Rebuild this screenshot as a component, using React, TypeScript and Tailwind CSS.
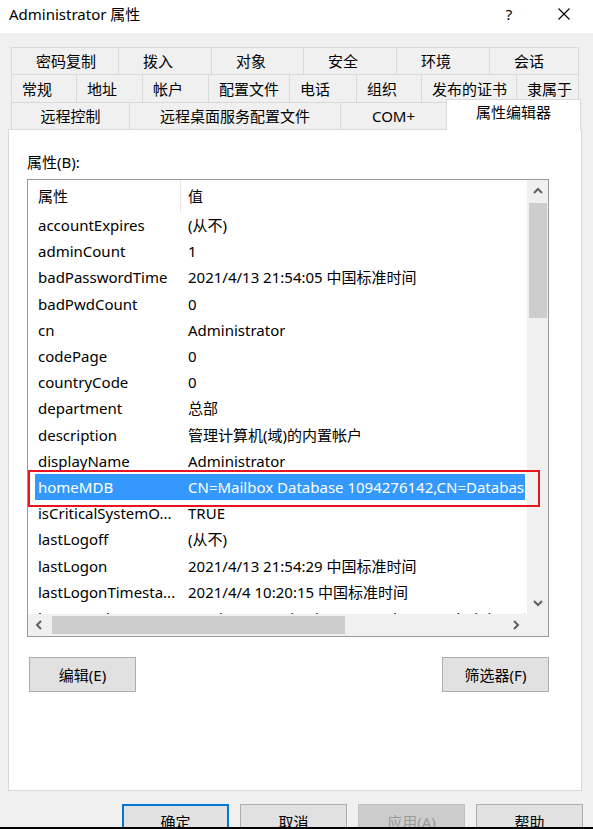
import React from "react";

const rows: [string, string][] = [
  ["accountExpires", "(从不)"],
  ["adminCount", "1"],
  ["badPasswordTime", "2021/4/13 21:54:05 中国标准时间"],
  ["badPwdCount", "0"],
  ["cn", "Administrator"],
  ["codePage", "0"],
  ["countryCode", "0"],
  ["department", "总部"],
  ["description", "管理计算机(域)的内置帐户"],
  ["displayName", "Administrator"],
  ["homeMDB", "CN=Mailbox Database 1094276142,CN=Databases,CN=Exchange Administrative Group"],
  ["isCriticalSystemO...", "TRUE"],
  ["lastLogoff", "(从不)"],
  ["lastLogon", "2021/4/13 21:54:29 中国标准时间"],
  ["lastLogonTimesta...", "2021/4/4 10:20:15 中国标准时间"],
  ["legacyExchangeDN", "/o=First Organization/ou=Exchange Administrative Group (FYDIBOHF23SPDLT)/cn=Recipients"],
];

const row1: [string, number][] = [
  ["密码复制", 107],
  ["拨入", 93],
  ["对象", 92],
  ["安全", 93],
  ["环境", 93],
  ["会话", 90],
];
const row2: [string, number][] = [
  ["常规", 65],
  ["地址", 66],
  ["帐户", 66],
  ["配置文件", 81],
  ["电话", 67],
  ["组织", 65],
  ["发布的证书", 95],
  ["隶属于", 63],
];
const row3: [string, number][] = [
  ["远程控制", 118],
  ["远程桌面服务配置文件", 211],
  ["COM+", 106],
];

function Chevron({ dir }: { dir: "up" | "down" | "left" | "right" }) {
  const pts =
    dir === "up"
      ? "1,6 5,2 9,6"
      : dir === "down"
      ? "1,2 5,6 9,2"
      : dir === "left"
      ? "6,1 2,5 6,9"
      : "2,1 6,5 2,9";
  const w = dir === "up" || dir === "down" ? 10 : 8;
  const h = dir === "up" || dir === "down" ? 8 : 10;
  return (
    <svg width={w} height={h} viewBox={`0 0 ${w} ${h}`}>
      <polyline points={pts} fill="none" stroke="#606060" strokeWidth="2" />
    </svg>
  );
}

function Btn({ label, primary, disabled }: { label: string; primary?: boolean; disabled?: boolean }) {
  return (
    <div
      className={
        "w-[107px] h-[35px] flex items-center justify-center shrink-0 text-[15px] leading-[20px] " +
        (primary
          ? "border-2 border-[#0078d7] bg-[#e1e1e1] text-black"
          : disabled
          ? "border border-[#bfbfbf] bg-[#cccccc] text-[#9a9a9a]"
          : "border border-[#adadad] bg-[#e1e1e1] text-black")
      }
    >
      {label}
    </div>
  );
}

export default function App() {
  return (
    <div className="w-[593px] h-[829px] overflow-hidden flex flex-col bg-[#f0f0f0] text-black font-['Noto_Sans','Noto_Sans_CJK_SC',sans-serif]">
      {/* Title bar */}
      <div className="h-[33px] shrink-0 bg-white flex items-start">
        <div className="pl-[9px] pt-[4px] text-[15px] leading-[20px]">Administrator 属性</div>
        <div className="ml-auto flex pr-[6px] gap-[9px] pt-[4px]">
          <div className="w-[46px] h-[20px] flex items-center justify-center text-[15px] leading-[20px]">?</div>
          <div className="w-[46px] h-[20px] flex items-center justify-center">
            <svg width="12" height="12" viewBox="0 0 12 12">
              <line x1="0.5" y1="0.5" x2="11.5" y2="11.5" stroke="#000" strokeWidth="1.1" />
              <line x1="11.5" y1="0.5" x2="0.5" y2="11.5" stroke="#000" strokeWidth="1.1" />
            </svg>
          </div>
        </div>
      </div>

      {/* Body */}
      <div className="flex-1 min-h-0 overflow-hidden pt-[14px]">
        {/* Tabs */}
        <div className="pl-[11px] text-[15px] leading-[20px]">
          <div className="flex h-[27px]">
            {row1.map(([t, w], i) => (
              <div
                key={t}
                style={{ width: w }}
                className={
                  "h-full flex items-center pl-[24px] border-t border-l border-[#d9d9d9] " +
                  (i === row1.length - 1 ? "border-r" : "")
                }
              >
                {t}
              </div>
            ))}
          </div>
          <div className="flex h-[28px]">
            {row2.map(([t, w], i) => (
              <div
                key={t}
                style={{ width: w }}
                className={
                  "h-full flex items-center pl-[10px] border-t border-l border-[#d9d9d9] " +
                  (i === row2.length - 1 ? "border-r" : "")
                }
              >
                {t}
              </div>
            ))}
          </div>
          <div className="flex h-[27px] items-end">
            {row3.map(([t, w]) => (
              <div
                key={t}
                style={{ width: w }}
                className="h-[27px] flex items-center justify-center border-t border-l border-[#d9d9d9]"
              >
                {t}
              </div>
            ))}
            <div className="relative z-10 w-[135px] h-[31px] -mb-[1px] flex items-start pt-[2px] justify-center bg-white border-t border-l border-r border-[#d9d9d9]">
              属性编辑器
            </div>
          </div>
        </div>

        {/* Panel */}
        <div className="ml-[8px] w-[574px] h-[662px] bg-white border border-[#d9d9d9] pl-[18px] pt-[22px] flex flex-col">
          <div className="text-[15px] leading-[20px]">属性(B):</div>

          {/* List box */}
          <div className="relative mt-[7px] w-[522px] h-[458px] border border-[#999999] flex flex-col text-[15px] leading-[20px]">
            <div className="flex h-[434px]">
              <div className="w-[499px] h-full overflow-hidden flex flex-col">
                <div className="h-[32px] shrink-0 flex items-center">
                  <div className="w-[152px] pl-[10px]">属性</div>
                  <div className="w-px h-[31px] bg-[#e5e5e5] self-end" />
                  <div className="pl-[7px]">值</div>
                </div>
                {rows.map(([k, v]) => {
                  const sel = k === "homeMDB";
                  return (
                    <div
                      key={k}
                      className={
                        "h-[26.2px] shrink-0 ml-[7px] mr-[2px] flex items-center whitespace-nowrap overflow-hidden " +
                        (sel ? "bg-[#3399ff] text-white" : "")
                      }
                    >
                      <div className="w-[151px] shrink-0 pl-[3px] overflow-hidden">{k}</div>
                      <div className="pl-[2px] overflow-hidden">{v}</div>
                    </div>
                  );
                })}
              </div>
              {/* Vertical scrollbar */}
              <div className="w-[21px] h-full bg-[#f0f0f0] flex flex-col items-center">
                <div className="h-[22px] w-full flex items-center justify-center">
                  <Chevron dir="up" />
                </div>
                <div className="mt-[1px] w-[18px] h-[115px] bg-[#cdcdcd]" />
                <div className="mt-auto h-[22px] w-full flex items-center justify-center">
                  <Chevron dir="down" />
                </div>
              </div>
            </div>
            <div className="flex h-[22px]">
              <div className="w-[499px] h-full bg-[#f0f0f0] flex items-center">
                <div className="w-[22px] h-full flex items-center justify-center">
                  <Chevron dir="left" />
                </div>
                <div className="ml-[2px] w-[293px] h-[18px] bg-[#cdcdcd]" />
                <div className="ml-auto w-[22px] h-full flex items-center justify-center">
                  <Chevron dir="right" />
                </div>
              </div>
              <div className="w-[21px] h-full bg-[#f0f0f0]" />
            </div>

            {/* Red annotation box */}
            <div className="absolute left-[0px] top-[290px] w-[512px] h-[37px] border-[2px] border-[#e8141e] pointer-events-none" />
          </div>

          {/* Edit / Filter buttons */}
          <div className="mt-[20px] w-[522px] flex justify-between">
            <div className="ml-[2px]">
              <Btn label="编辑(E)" />
            </div>
            <Btn label="筛选器(F)" />
          </div>
        </div>

        {/* Bottom buttons */}
        <div className="mt-[13px] pl-[122px] flex gap-[11px]">
          <Btn label="确定" primary />
          <Btn label="取消" />
          <Btn label="应用(A)" disabled />
          <Btn label="帮助" />
        </div>
      </div>

      <div className="h-[2px] shrink-0 bg-black" />
    </div>
  );
}
